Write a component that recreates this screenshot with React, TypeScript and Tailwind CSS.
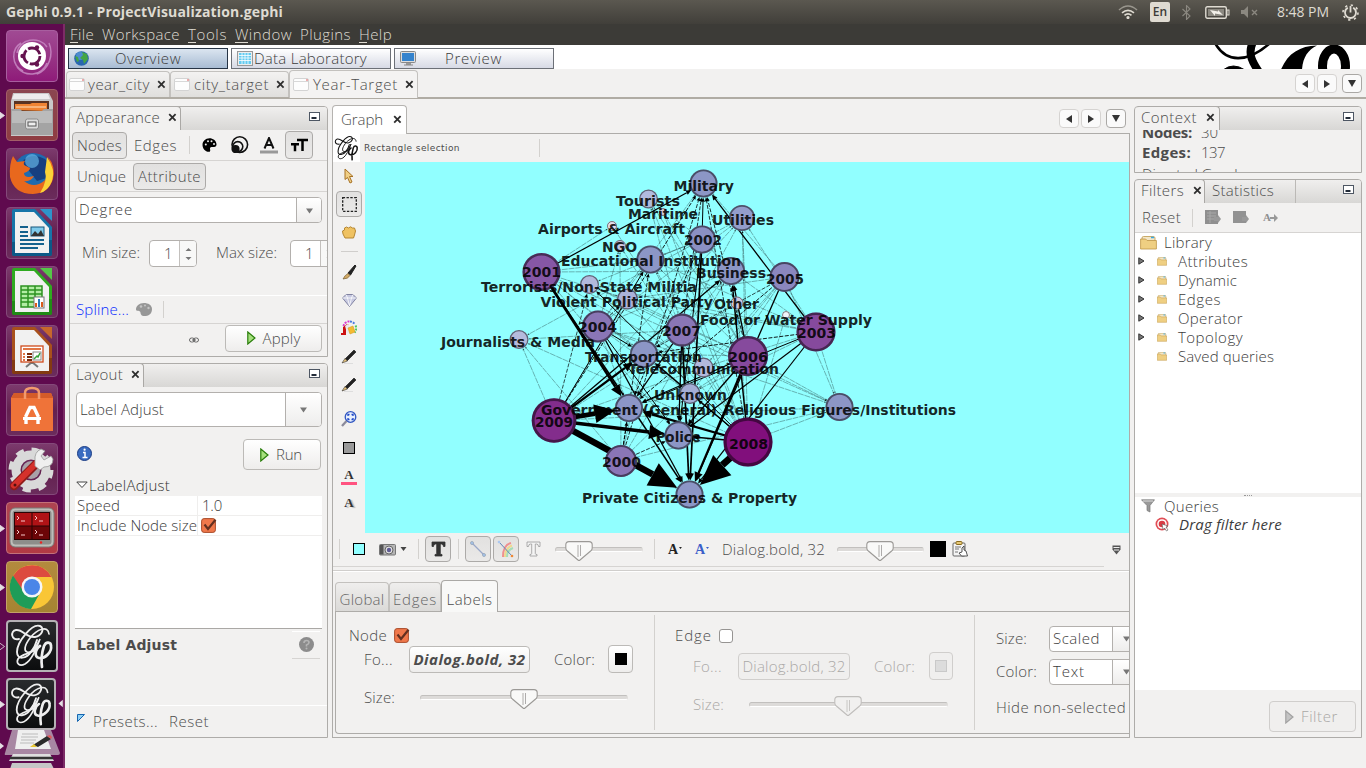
import { useLayoutEffect, useRef, type ReactNode } from "react";

/* ---------- text that keeps a set advance width ---------- */
function T({ w, c = "", children }: { w: number; c?: string; children: string }) {
  const ref = useRef<HTMLSpanElement>(null);
  useLayoutEffect(() => {
    const el = ref.current;
    if (!el) return;
    el.style.letterSpacing = "0px";
    const natural = el.getBoundingClientRect().width;
    el.style.letterSpacing = `${(w - natural) / children.length}px`;
  }, [w, children]);
  return (
    <span ref={ref} className={"inline-block shrink-0 whitespace-pre " + c}>
      {children}
    </span>
  );
}

const ui = "font-['Open_Sans',sans-serif] font-light text-[15px] leading-[19px]";

/* ---------- small controls ---------- */
const Sep = ({ c = "" }: { c?: string }) => <div className={"w-px shrink-0 bg-[#d3d1ce] " + c} />;

const Close = ({ c = "" }: { c?: string }) => (
  <svg className={"h-[9px] w-[9px] shrink-0 " + c} viewBox="0 0 9 9">
    <path d="M1.2 1.2l6.4 6.4M7.6 1.2L1.2 7.6" stroke="#2e2e2e" strokeWidth="1.8" />
  </svg>
);

const Minimise = () => (
  <svg className="mr-[7px] mt-[5px] h-[9px] w-[11px] shrink-0" viewBox="0 0 11 9">
    <rect x=".5" y=".5" width="10" height="8" fill="#fff" stroke="#4d5663" />
    <path d="M2.5 6h5" stroke="#222b38" strokeWidth="2" />
  </svg>
);

const Down = ({ c = "" }: { c?: string }) => (
  <svg className={"h-[6px] w-[9px] shrink-0 " + c} viewBox="0 0 9 6">
    <path d="M1 .5h7L4.5 5.5z" fill="#777" />
  </svg>
);

function NavButtons({ c = "" }: { c?: string }) {
  const box = "flex h-[19px] w-[20px] items-center justify-center rounded-[4px] border bg-[#fafafa] ";
  return (
    <div className={"flex shrink-0 items-center " + c}>
      <div className={box + "border-[#d5d3d1]"}>
        <svg className="h-[8px] w-[6px]" viewBox="0 0 6 8"><path d="M6 0v8L0 4z" fill="#333" /></svg>
      </div>
      <div className={box + "ml-[2px] border-[#d5d3d1]"}>
        <svg className="h-[8px] w-[6px]" viewBox="0 0 6 8"><path d="M0 0v8L6 4z" fill="#333" /></svg>
      </div>
      <div className={box + "ml-[5px] border-[#aaa8a5]"}>
        <svg className="h-[7px] w-[8px]" viewBox="0 0 8 7"><path d="M0 0h8L4 7z" fill="#333" /></svg>
      </div>
    </div>
  );
}

function Btn({ c, off, on, children }: { c: string; off?: boolean; on?: boolean; children: ReactNode }) {
  const look = on
    ? "border-[#acaaa8] bg-linear-to-b from-[#e2e1e0] to-[#eae9e8] "
    : off
      ? "border-[#d0cecc] bg-[#f0efee] "
      : "border-[#bcbab7] bg-linear-to-b from-white to-[#eeedec] ";
  return <div className={"flex shrink-0 items-center justify-center rounded-[4px] border " + look + c}>{children}</div>;
}

function Slider({ c, thumb, off }: { c: string; thumb: string; off?: boolean }) {
  return (
    <div className={"flex shrink-0 items-center " + c}>
      <div className="h-[5px] w-full rounded-[3px] border border-t-[#c2c0be] border-r-[#e0dedc] border-b-white border-l-[#c9c7c5] bg-[#dddbd9]">
        <svg className={"relative -top-[7px] h-[20px] w-[28px] " + thumb} viewBox="0 0 28 20">
          <path
            d="M4 .6h20q3.2 0 3.2 3.2v3.2q0 1.500-1 2.500L15 19q-1 .8-2 0L1.800 9.500q-1-1-1-2.500V3.800Q.8.600 4 .600z"
            fill={off ? "#f1f0ef" : "#f9f9f8"} stroke={off ? "#c0bebc" : "#9b9996"} strokeWidth="1.100"
          />
          <path d="M13 4v12M15.500 4v11" stroke={off ? "#c4c2c0" : "#a5a3a1"} strokeWidth=".9" />
        </svg>
      </div>
    </div>
  );
}

const Checked = ({ c = "" }: { c?: string }) => (
  <svg className={"h-[15px] w-[17px] shrink-0 " + c} viewBox="0 0 17 15">
    <rect x=".6" y=".6" width="13.800" height="13.800" rx="2.500" fill="#f0784b" stroke="#a84c2b" />
    <path d="M3.500 6.500l3.500 4.500L14.500 1.800" fill="none" stroke="#643020" strokeWidth="2.200" />
  </svg>
);

const Play = ({ off }: { off?: boolean }) => (
  <svg className="h-[14px] w-[9px] shrink-0" viewBox="0 0 9 14">
    <path d="M.8 1l7.200 6-7.200 6z" fill={off ? "#c4c4c4" : "#a5df7d"} stroke={off ? "#a2a2a2" : "#2a7e0b"} strokeWidth="1.200" />
  </svg>
);

/* ---------- Gephi monogram ---------- */
const Monogram = ({ c, ink }: { c: string; ink: string }) => (
  <svg className={c} viewBox="0 0 48 48" fill="none" stroke={ink} strokeLinecap="round">
    <path d="M11 17C3 19 2 9 8 8c7-1 10 8 19 7 7-1 10-9 5-11C24 1 9 20 9 30c0 9 10 6 14 0 3-4 5-8 6-12" strokeWidth="1.900" />
    <path d="M41 12C40 3 29 7 22 16c-6 8-6 13-3 14 4 2 10-6 13-13-4 10-8 21-15 25-6 3-9-1-7-5 3-5 12-5 17-9" strokeWidth="1.700" />
    <path d="M32 24c-5 3-6 11-1 12 7 1 13-7 12-12 0-4-5-5-7 0-2 6-3 14-2 21" strokeWidth="2.700" />
  </svg>
);

/* ---------- launcher ---------- */
function Tile({ bg, run, children }: { bg: string; run?: "on" | "off" | "focus"; children: ReactNode }) {
  return (
    <div className="flex h-[59px] shrink-0 items-start">
      <div className="flex h-[52px] w-[6px] items-center">
        {run && (
          <svg className="h-[9px] w-[5px]" viewBox="0 0 5 9">
            <path d="M-1 .5L4.500 4.500-1 8.500z" fill={run === "off" ? "none" : "#e4dfe3"} stroke="#e4dfe3" strokeWidth=".8" />
          </svg>
        )}
      </div>
      <div className={"h-[52px] w-[52px] overflow-hidden rounded-[4px] border " + bg}>{children}</div>
      {run === "focus" && (
        <svg className="ml-[2px] mt-[21px] h-[9px] w-[5px]" viewBox="0 0 5 9"><path d="M5 .5L.5 4.500 5 8.500z" fill="#e4dfe3" /></svg>
      )}
    </div>
  );
}

const Doc = ({ edge, fold, dark, children }: { edge: string; fold: string; dark: string; children: ReactNode }) => (
  <svg viewBox="0 0 50 50" className="h-full w-full">
    <path d="M7 1h21l17 18v27q0 2-2 2H7q-2 0-2-2V3q0-2 2-2z" fill={edge} />
    <path d="M5 34v12q0 2 2 2h36q2 0 2-2V32z" fill={dark} opacity=".5" />
    <path d="M33 1h12v12z" fill={fold} />
    <path d="M8 4h19l15 16v25H8z" fill="#f1f1f1" />
    {children}
  </svg>
);

const plain = "border-[#84497a] bg-linear-to-b from-[#7c3a6d] via-[#63204f] to-[#6b2c5c]";

function Launcher() {
  return (
    <div className="flex w-[65px] shrink-0 flex-col overflow-hidden border-r-2 border-[#7c2c66] bg-[#5f0a4e] pt-[6px]">
      <Tile bg="border-[#a85e9f] bg-linear-to-b from-[#a04a93] to-[#8f1a79]">
        <svg viewBox="0 0 50 50" className="h-full w-full" fill="none">
          <path d="M10 22C12 8 32 4 40 16M16 40C4 34 4 18 14 12M40 32C34 46 18 46 10 36M42 12c5 12 0 26-12 31" stroke="#c07cba" strokeWidth="1.500" />
          <circle cx="25" cy="25" r="14" fill="#fff" />
          <circle cx="25" cy="25" r="8" stroke="#65134f" strokeWidth="2.800" strokeDasharray="14.700 2" />
          <circle cx="15.500" cy="25" r="2.200" fill="#65134f" /><circle cx="30" cy="16.500" r="2.200" fill="#65134f" /><circle cx="30" cy="33.500" r="2.200" fill="#65134f" />
        </svg>
      </Tile>
      <Tile run="on" bg="border-[#a35e68] bg-linear-to-b from-[#8b4650] to-[#8f3c42]">
        <svg viewBox="0 0 50 50" className="h-full w-full">
          <path d="M6 3h36l4 8v35H4V11z" fill="#c9c9c9" />
          <path d="M7 4h34l2 5H5z" fill="#ededed" />
          <rect x="7" y="11" width="35" height="10" fill="#5b3423" />
          <path d="M8 20v-6h15l2-1h15v8z" fill="#f08433" /><path d="M9 17h30" stroke="#ffe1c0" />
          <path d="M4 19h9l2 2h20l2-2h9v26H4z" fill="#a4a4a4" /><path d="M5 21h40v12H5z" fill="#c4c4c4" opacity=".7" />
          <rect x="18.500" y="29" width="13" height="10" rx="2" fill="#ddd" stroke="#8a8a8a" /><rect x="21" y="32" width="8" height="4" fill="#eee" stroke="#555" />
        </svg>
      </Tile>
      <Tile bg={plain}>
        <svg viewBox="0 0 50 50" className="h-full w-full">
          <circle cx="26" cy="24" r="20" fill="#1e6bb0" />
          <path d="M15 13Q24 3 38 10 46 18 43 28L30 32Z" fill="#163f80" /><circle cx="25" cy="12" r="7" fill="#62b4e4" opacity=".7" />
          <path d="M6 7l4 6 8-1q-2 2-1 4l6 3q0 3-6 5 0 4 5 4l5-1q-3 6-10 5 10 8 20 0 4-3 4-9 3-8 0-15 8 9 5 22-4 14-20 15Q7 45 3 28 2 15 6 7z" fill="#e8681d" />
          <path d="M40 8q9 13 5 24-4 10-12 12 8-13 5-21z" fill="#fbd238" />
        </svg>
      </Tile>
      <Tile bg={plain}>
        <Doc edge="#1775a9" fold="#2e94ca" dark="#003d65">
          <path d="M13 19h8M13 24h8M13 28h8M13 32h24M13 36h24M13 40h18" stroke="#14618d" strokeWidth="2" />
          <rect x="24" y="19" width="13" height="9" fill="#7fcaeb" stroke="#16577d" /><path d="M24 28l4-5 3 3 3-4 3 6z" fill="#333" />
        </Doc>
      </Tile>
      <Tile bg={plain}>
        <Doc edge="#2faa20" fold="#55c748" dark="#116b09">
          <path d="M14 19h21v21H14z" fill="#b3eda4" /><path d="M14 19h21v21H14zM14 23h21M14 27h21M14 31h21M14 35h21M21 19v21M28 19v21" fill="none" stroke="#2c9220" strokeWidth="1.500" />
          <rect x="27" y="30" width="10" height="11" fill="#fff" stroke="#777" /><path d="M29 40v-4M35 40v-5" stroke="#db5b19" strokeWidth="2" /><path d="M32 40v-8" stroke="#2779b9" strokeWidth="2" />
        </Doc>
      </Tile>
      <Tile bg={plain}>
        <Doc edge="#a8501c" fold="#c7682c" dark="#5d2408">
          <path d="M19 41l6-5 6 5M25 35v3" stroke="#777" strokeWidth="2" fill="none" />
          <rect x="14" y="20" width="22" height="16" fill="#fff" stroke="#cf4b1c" strokeWidth="1.300" />
          <path d="M16 23h18" stroke="#e17544" strokeWidth="2" /><path d="M16 28h2M16 31h2M16 34h2" stroke="#e17544" strokeWidth="2" /><path d="M20 28h5M20 31h5M20 34h5" stroke="#7c2c0c" strokeWidth="2" />
          <rect x="26" y="26" width="8" height="8" fill="#fff" stroke="#888" /><path d="M27 33l3-3 1 1 2-4" stroke="#35a237" fill="none" strokeWidth="1.500" />
        </Doc>
      </Tile>
      <Tile bg={plain}>
        <svg viewBox="0 0 50 50" className="h-full w-full">
          <path d="M7 8h37l2 5v33H4V13z" fill="#ef7339" /><path d="M7 8h37l2 5H4z" fill="#d45b29" />
          <path d="M18 14V8q0-5 7-5t7 5v6" fill="none" stroke="#f29a6e" strokeWidth="2.500" />
          <path d="M18.500 32L23 22.500h4L31.500 32M19 35v4M31 35v4" stroke="#fff" strokeWidth="3.400" fill="none" />
          <path d="M16 33.500h18" stroke="#fff" strokeWidth="3" />
        </svg>
      </Tile>
      <Tile bg={plain}>
        <svg viewBox="0 0 50 50" className="h-full w-full">
          <circle cx="24" cy="26" r="15" fill="none" stroke="#d9d9d9" strokeWidth="9" />
          <circle cx="24" cy="26" r="20" fill="none" stroke="#d9d9d9" strokeWidth="5" strokeDasharray="8 7.700" />
          <circle cx="24" cy="26" r="9" fill="#a9a1a8" />
          <path d="M7 42l22-22" stroke="#8e1c1a" strokeWidth="8.500" strokeLinecap="round" /><path d="M7 41.500l22-22" stroke="#d5312c" strokeWidth="6" strokeLinecap="round" />
          <path d="M28 17q-1-9 6-12l4 2-4 5 3 4 7-4 2 3q0 8-9 8l-4 3-5-4z" fill="#efefef" stroke="#999" strokeWidth=".8" /><circle cx="8" cy="41" r="1.500" fill="#551010" />
        </svg>
      </Tile>
      <Tile run="on" bg="border-[#c4717a] bg-linear-to-b from-[#ad4451] to-[#b23a44]">
        <svg viewBox="0 0 50 50" className="h-full w-full">
          <rect x="3" y="5" width="44" height="39" rx="5" fill="#bdbdb9" stroke="#7a7a76" /><rect x="5.500" y="7.500" width="39" height="34" rx="3" fill="#8d8d8a" />
          <rect x="7" y="9" width="36" height="28" fill="#2b0405" />
          <path d="M8 10h16.500v12.500H8zM25.500 10H42v12.500H25.500z" fill="#b01316" /><path d="M8 23.500h16.500V36H8zM25.500 23.500H42V36H25.500z" fill="#6c0507" />
          <path d="M10 13l2 2-2 2M14 18h4M28 13l2 2-2 2M32 18h4M10 27l2 2-2 2M14 32h4M28 27l2 2-2 2M32 32h4" stroke="#f5c8c8" fill="none" />
          <circle cx="34" cy="39.500" r="1.200" fill="#e22" />
        </svg>
      </Tile>
      <Tile run="on" bg="border-[#c4a267] bg-linear-to-b from-[#b38a3e] to-[#a58432]">
        <svg viewBox="0 0 50 50" className="h-full w-full">
          <circle cx="25" cy="25" r="22" fill="#f9c636" />
          <path d="M25 15h19.500A22 22 0 0 0 6 14l10 16z" fill="#dc4b3f" />
          <path d="M6 13.600A22 22 0 0 0 24 47l9.500-17H17z" fill="#1e9c58" />
          <circle cx="25" cy="25" r="10.500" fill="#f6f6f6" /><circle cx="25" cy="25" r="8" fill="#4a86e8" />
        </svg>
      </Tile>
      <Tile run="off" bg="border-2 border-[#b5b1b5] bg-linear-to-b from-[#292b2d] to-[#0c0d0e]"><Monogram c="h-full w-full" ink="#eeeeee" /></Tile>
      <div className="-mt-px flex flex-col">
        <Tile run="focus" bg="border-2 border-[#b5b1b5] bg-linear-to-b from-[#292b2d] to-[#0c0d0e]"><Monogram c="h-full w-full" ink="#eeeeee" /></Tile>
      </div>
      <svg className="-mt-[7px] h-[39px] w-[63px] shrink-0" viewBox="0 0 63 39">
        <path d="M12 0h39l9 23q0 2-2 2H6q-2 0-1-2z" fill="#a887a3" />
        <path d="M18 0h26l7 19H15z" fill="#efefef" /><path d="M22 4h16M21 7h17M21 10h15M20 13h14" stroke="#bbb" />
        <path d="M33 15L47 6l4 3-13 8z" fill="#2b2b2b" /><path d="M30 17l4-3 3 3z" fill="#e9c832" /><path d="M47 6l3-1 2 2-1 2z" fill="#e05a5a" />
        <path d="M13 24h37l4 7H9z" fill="#dedede" /><path d="M10 28h43" stroke="#333" strokeWidth="2.500" /><path d="M12 33h39l3 6H10z" fill="#c6c6c6" />
        <path d="M-1 12l5 4-5 4z" fill="#e4dfe3" />
      </svg>
    </div>
  );
}

/* ---------- graph ---------- */
type N = { x: number; y: number; r: number; f: string; t: string; a: number; b: number; ly: number };
const lilac = "#8c96c6", pale = "#b3b9dc";
const nodes: Record<string, N> = {
  y0: { x: 621, y: 461, r: 16, f: "#8a76b6", t: "2000", a: 602, b: 641, ly: 462 },
  y1: { x: 541.500, y: 272, r: 19, f: "#8657a5", t: "2001", a: 522, b: 561, ly: 272 },
  y2: { x: 702, y: 239.500, r: 14, f: "#8b90c3", t: "2002", a: 684, b: 722, ly: 240 },
  y3: { x: 816, y: 332, r: 19.500, f: "#864a9d", t: "2003", a: 797, b: 836, ly: 333 },
  y4: { x: 598, y: 326.500, r: 16, f: "#8a76b6", t: "2004", a: 578, b: 617, ly: 327 },
  y5: { x: 784.500, y: 277, r: 15, f: "#8b87be", t: "2005", a: 766, b: 804, ly: 278.500 },
  y6: { x: 748, y: 356, r: 20, f: "#864a9d", t: "2006", a: 728, b: 768, ly: 356.500 },
  y7: { x: 682, y: 330, r: 16.500, f: "#8a76b6", t: "2007", a: 662, b: 701, ly: 331 },
  y8: { x: 748, y: 442, r: 24.500, f: "#810f7c", t: "2008", a: 729, b: 768, ly: 443.500 },
  y9: { x: 554, y: 420.500, r: 22.300, f: "#832d8c", t: "2009", a: 535, b: 573, ly: 422 },
  mil: { x: 703.500, y: 183.500, r: 14, f: lilac, t: "Military", a: 673.500, b: 734, ly: 186 },
  uti: { x: 742, y: 218, r: 13, f: "#949dcb", t: "Utilities", a: 712, b: 774, ly: 219.500 },
  tou: { x: 648.500, y: 199, r: 9.500, f: "#b1badd", t: "Tourists", a: 616, b: 680, ly: 200.500 },
  mar: { x: 663, y: 212, r: 4, f: "#d9cede", t: "Maritime", a: 628, b: 698, ly: 213.500 },
  air: { x: 612, y: 226, r: 5, f: "#e3ddec", t: "Airports & Aircraft", a: 538, b: 685, ly: 228.500 },
  ngo: { x: 620, y: 246, r: 6, f: "#c9c6df", t: "NGO", a: 602, b: 637, ly: 247 },
  edu: { x: 650.500, y: 259.500, r: 14, f: lilac, t: "Educational Institution", a: 561, b: 741, ly: 261 },
  bus: { x: 731, y: 271, r: 14, f: lilac, t: "Business", a: 696, b: 766, ly: 273 },
  ter: { x: 589.500, y: 284.500, r: 9.500, f: pale, t: "Terrorists/Non-State Militia", a: 481, b: 697, ly: 286.500 },
  vio: { x: 627.500, y: 299, r: 10.500, f: "#abb1d8", t: "Violent Political Party", a: 540.500, b: 713, ly: 301.500 },
  oth: { x: 737, y: 303, r: 6.500, f: "#cfc9df", t: "Other", a: 714, b: 759, ly: 304 },
  foo: { x: 786, y: 315, r: 4, f: "#f2f4fa", t: "Food or Water Supply", a: 700, b: 872, ly: 319.500 },
  jou: { x: 519, y: 339.500, r: 9.500, f: "#b5bbdc", t: "Journalists & Media", a: 441, b: 595, ly: 342 },
  tra: { x: 644, y: 354, r: 14, f: lilac, t: "Transportation", a: 585, b: 702, ly: 356.500 },
  tel: { x: 703.500, y: 367.500, r: 10, f: pale, t: "Telecommunication", a: 628, b: 779, ly: 369 },
  unk: { x: 690, y: 393.500, r: 10.500, f: "#a5add5", t: "Unknown", a: 654, b: 727, ly: 394.500 },
  gov: { x: 629, y: 408, r: 14, f: lilac, t: "Government (General)", a: 541, b: 717, ly: 410 },
  rel: { x: 839.500, y: 407, r: 14, f: lilac, t: "Religious Figures/Institutions", a: 724, b: 956, ly: 409.500 },
  pol: { x: 678.500, y: 435.500, r: 14, f: lilac, t: "Police", a: 655.500, b: 701, ly: 437 },
  pri: { x: 689.500, y: 494.500, r: 14, f: lilac, t: "Private Citizens & Property", a: 582, b: 797, ly: 497.500 },
};

// source year, target, stroke weight
const strong: [string, string, number][] = [
  ["y9", "pri", 6.5], ["y8", "pri", 7], ["y9", "gov", 4.8], ["y9", "pol", 3.600], ["y1", "gov", 2.600], ["y1", "pri", 1.600],
  ["y6", "pri", 2.200], ["y8", "gov", 2.200], ["y8", "pol", 1.500], ["y9", "tra", 2.200], ["y9", "bus", 1.300], ["y7", "pri", 1.700],
  ["y7", "pol", 1.300], ["y2", "pri", 1.700], ["y2", "pol", 1], ["y3", "pol", 1.200], ["y3", "mil", 1.300], ["y5", "pri", 1.300],
  ["y5", "gov", 0.9], ["y4", "pri", 1.300], ["y4", "pol", 1], ["y1", "mil", 1.200], ["y8", "tra", 1.400], ["y6", "bus", 1.300],
  ["y6", "pol", 1.300], ["y8", "ter", 1], ["y6", "mil", 0.8], ["y3", "gov", 1], ["y3", "pri", 1.200], ["y8", "bus", 1.500],
  ["y9", "edu", 1], ["y0", "edu", 0.800], ["y0", "mil", 0.800], ["y9", "mil", 0.9], ["y2", "mil", 1], ["y7", "mil", 0.8],
  ["y4", "tra", 1], ["y4", "vio", 0.800], ["y2", "gov", 0.9], ["y7", "gov", 1.200], ["y3", "tra", 0.9], ["y5", "tra", 0.7],
  ["y9", "ter", 0.7], ["y8", "unk", 1], ["y0", "gov", 0.9], ["y0", "pol", 0.8], ["y6", "gov", 1.100], ["y8", "mil", 0.8],
];
const faint: [string, string][] = [
  ["y0", "jou"], ["y9", "jou"], ["y2", "jou"], ["y8", "jou"], ["y7", "jou"],
  ["y1", "rel"], ["y3", "rel"], ["y4", "rel"], ["y5", "rel"], ["y6", "rel"], ["y7", "rel"], ["y8", "rel"], ["y9", "rel"], ["y0", "rel"],
  ["y3", "uti"], ["y8", "uti"], ["y9", "uti"], ["y7", "uti"], ["y4", "uti"], ["y6", "uti"], ["y2", "uti"],
  ["y1", "edu"], ["y2", "edu"], ["y3", "edu"], ["y4", "edu"], ["y6", "edu"], ["y7", "edu"], ["y8", "edu"],
  ["y1", "bus"], ["y2", "bus"], ["y3", "bus"], ["y4", "bus"], ["y5", "bus"], ["y7", "bus"], ["y0", "bus"],
  ["y2", "tra"], ["y1", "tra"], ["y6", "tra"], ["y7", "tra"], ["y0", "tra"], ["y4", "gov"], ["y5", "pol"], ["y1", "pol"], ["y0", "pri"],
  ["y2", "tou"], ["y6", "tou"], ["y7", "tou"], ["y8", "tou"], ["y6", "mar"], ["y8", "mar"], ["y1", "air"], ["y7", "air"], ["y8", "ngo"], ["y4", "ngo"], ["y0", "ngo"],
  ["y6", "ter"], ["y7", "ter"], ["y3", "ter"], ["y2", "ter"], ["y1", "vio"], ["y3", "vio"], ["y6", "vio"], ["y8", "vio"], ["y9", "vio"], ["y5", "vio"],
  ["y8", "oth"], ["y6", "oth"], ["y9", "oth"], ["y3", "foo"], ["y8", "foo"], ["y1", "tel"], ["y3", "tel"], ["y9", "tel"], ["y8", "tel"], ["y4", "tel"], ["y5", "tel"],
  ["y1", "unk"], ["y3", "unk"], ["y9", "unk"], ["y6", "unk"], ["y7", "unk"], ["y5", "unk"], ["y4", "unk"], ["y0", "unk"], ["y4", "mil"], ["y5", "mil"],
];

function Edge({ s, t, w, faded }: { s: N; t: N; w: number; faded?: boolean }) {
  const dx = t.x - s.x, dy = t.y - s.y, d = Math.hypot(dx, dy);
  const ux = dx / d, uy = dy / d;
  const len = faded ? 2 : Math.max(4, w * 4.3), half = faded ? 0.8 : Math.max(1.8, w * 1.95);
  const tx = t.x - ux * t.r, ty = t.y - uy * t.r;
  const bx = tx - ux * len, by = ty - uy * len;
  const p = (n: number) => n.toFixed(1);
  return (
    <g opacity={faded ? 0.75 : 1}>
      <path d={`M${p(s.x)} ${p(s.y)}L${p(bx)} ${p(by)}`} stroke="#000" strokeWidth={w} strokeDasharray={faded ? "6 .8" : w <= 0.9 ? "4 1.5" : undefined} />
      <path d={`M${p(tx)} ${p(ty)}L${p(bx - uy * half)} ${p(by + ux * half)}L${p(bx + uy * half)} ${p(by - ux * half)}z`} />
    </g>
  );
}

function Graph() {
  const all = Object.values(nodes);
  return (
    <svg className="h-[371px] w-[764px] shrink-0 bg-[#91ffff]" viewBox="365 162 764 371">
      {faint.map(([a, b]) => <Edge key={a + b} s={nodes[a]} t={nodes[b]} w={0.4} faded />)}
      {strong.map(([a, b, w]) => <Edge key={a + b} s={nodes[a]} t={nodes[b]} w={w} />)}
      {all.map((n) => {
        const ring = Math.max(1, n.r * 0.13);
        return (
          <g key={n.t}>
            <circle cx={n.x} cy={n.y} r={n.r} fill={n.f} />
            <circle cx={n.x} cy={n.y} r={n.r - ring / 2} fill="none" stroke="#000" strokeOpacity=".48" strokeWidth={ring} />
          </g>
        );
      })}
      <g fill="#000" fillOpacity=".87" className="font-['DejaVu_Sans',sans-serif] text-[13.500px] font-bold">
        {all.map((n) => (
          <text key={n.t} x={n.a} y={n.ly + 5} textLength={n.b - n.a} lengthAdjust="spacingAndGlyphs">{n.t}</text>
        ))}
      </g>
    </svg>
  );
}

/* ---------- window chrome ---------- */
function TopBar() {
  return (
    <div className="flex h-[24px] shrink-0 items-center bg-linear-to-b from-[#5b5850] to-[#413f3a] pl-[6px] font-['Open_Sans',sans-serif] text-[#dfdbd2]">
      <T w={277} c="text-[14px] font-bold leading-[18px]">Gephi 0.9.1 - ProjectVisualization.gephi</T>
      <div className="flex-1" />
      <svg className="mr-[-1px] h-[14px] w-[20px]" viewBox="0 0 20 14" fill="none" stroke="#dfdbd2" strokeWidth="1.600">
        <path d="M1 5Q10-3 19 5" opacity=".5" /><path d="M4 7.800q6-5 12 0M6.500 10.300q3.500-3 7 0" /><circle cx="10" cy="12.500" r=".8" fill="#dfdbd2" />
      </svg>
      <div className="ml-[13px] flex h-[20px] w-[20px] items-center justify-center rounded-[2px] bg-[#dfdbd2] text-[12px] font-semibold text-[#3c3b37]">En</div>
      <svg className="ml-[12px] h-[15px] w-[9px]" viewBox="0 0 9 15" fill="none" stroke="#8b8880" strokeWidth="1.100"><path d="M.5 4l7.500 7-3.500 3.500V.500L8 4 .5 11" /></svg>
      <svg className="ml-[14px] h-[13px] w-[25px]" viewBox="0 0 25 13">
        <rect x=".8" y=".8" width="20.500" height="11.400" rx="1.500" fill="none" stroke="#dfdbd2" strokeWidth="1.400" /><rect x="22" y="4" width="2" height="5" fill="none" stroke="#dfdbd2" />
        <rect x="3" y="3" width="16" height="7" fill="#8b8880" /><path d="M5 4l8 1.500V4l5 5-8-1.500V10z" fill="#f2efe8" />
      </svg>
      <svg className="ml-[11px] h-[12px] w-[18px]" viewBox="0 0 18 12"><path d="M0 4h3l4-4v12L3 8H0z" fill="#8b8880" /><path d="M11 4l5 5M16 4l-5 5" stroke="#8b8880" strokeWidth="1.400" /></svg>
      <T w={52} c="ml-[18px] text-[14px] leading-[18px]">8:48 PM</T>
      <svg className="ml-[13px] mr-[7px] h-[17px] w-[17px]" viewBox="0 0 17 17" fill="none" stroke="#dfdbd2">
        <circle cx="8.500" cy="8.500" r="5.500" strokeWidth="1.800" strokeDasharray="29 5.500" strokeDashoffset="6.500" /><circle cx="8.500" cy="8.500" r="7.500" strokeWidth="1.600" strokeDasharray="2.300 3.590" /><path d="M8.500 2v6.500" strokeWidth="1.800" />
      </svg>
    </div>
  );
}

function Menu() {
  const items: [string, string, number][] = [["F", "ile", 24], ["", "Workspace", 78], ["T", "ools", 39], ["W", "indow", 57], ["", "Plugins", 51], ["H", "elp", 33]];
  return (
    <div className={"flex h-[21px] shrink-0 items-center gap-[8px] bg-[#3c3b37] pl-[5px] text-[#dfdbd2] " + ui}>
      {items.map(([u, rest, w]) => (
        <span key={rest} className="relative flex shrink-0">
          <T w={w}>{u + rest}</T>
          {u && <span className={"absolute bottom-[1px] left-0 h-px bg-[#dfdbd2] " + (u === "W" ? "w-[13px]" : "w-[8px]")} />}
        </span>
      ))}
    </div>
  );
}

function Modes() {
  const box = "flex h-[21px] w-[160px] shrink-0 items-center border ";
  return (
    <div className={"flex h-[24px] shrink-0 items-center bg-white pl-[3px] pt-[2px] text-[#3c3c3c] " + ui}>
      <div className={box + "border-[#263445] bg-linear-to-b from-[#dbe5f0] to-[#a8bcd3]"}>
        <svg className="ml-[5px] h-[15px] w-[15px]" viewBox="0 0 15 15"><circle cx="7.500" cy="7.500" r="7.300" fill="#2867b0" /><circle cx="6" cy="5" r="4" fill="#5d9ddd" opacity=".7" /><path d="M8 1l5 2 1 5-4 5-1-4-3-2 3-3zM1 5l3 1 1 4-2 1z" fill="#43a545" /></svg>
        <T w={66} c="ml-[26px]">Overview</T>
      </div>
      <div className={box + "ml-[3px] border-[#6c7077] bg-linear-to-b from-white to-[#d7dae5]"}>
        <svg className="ml-[5px] h-[15px] w-[16px]" viewBox="0 0 16 15"><rect x=".5" y=".5" width="15" height="14" fill="#eee" stroke="#999" /><rect x="2" y="2" width="12" height="11" fill="#63cbf0" /><path d="M2 4.500h12M2 7h12M2 9.500h12M5 2v11M8 2v11M11 2v11" stroke="#fff" strokeWidth=".8" /></svg>
        <T w={113} c="ml-[1px]">Data Laboratory</T>
      </div>
      <div className={box + "ml-[3px] border-[#6c7077] bg-linear-to-b from-white to-[#d7dae5]"}>
        <svg className="ml-[5px] h-[15px] w-[17px]" viewBox="0 0 17 15"><rect x=".5" y=".5" width="15" height="11" rx="1" fill="#ddd" stroke="#888" /><rect x="2" y="2" width="12" height="8" fill="#3583cd" /><path d="M6 12h5v2H6z" fill="#999" /><path d="M4 14h9" stroke="#888" /></svg>
        <T w={57} c="ml-[28px]">Preview</T>
      </div>
      <div className="flex-1" />
      <svg className="-mt-[2px] h-[24px] w-[166px]" viewBox="0 0 166 24" fill="none" stroke="#000">
        <path d="M15-2C26 18 47 18 69-1" strokeWidth="2.600" /><path d="M53-3C47 9 53 18 59 27" strokeWidth="8" /><path d="M23 25Q33 17 45 25z" fill="#000" />
        <path d="M117 .500C100 1 88 8 81 24.500H102C103 12 108 5 117 .500z" fill="#000" stroke="none" />
        <ellipse cx="134" cy="21" rx="11.500" ry="17" strokeWidth="9" />
      </svg>
    </div>
  );
}

function DocTabs() {
  const tab = "flex items-center rounded-t-[4px] border border-b-0 border-[#c3c1be] ";
  const icon = (
    <svg className="h-[15px] w-[16px] shrink-0" viewBox="0 0 16 15"><rect x=".5" y="1.500" width="15" height="12" rx="1.500" fill="#fdfdfd" stroke="#d3d3d3" /><path d="M.5 4.500h15" stroke="#d8d8d8" /><path d="M13 3h2" stroke="#dc5c5c" /></svg>
  );
  return (
    <div className={"flex h-[30px] shrink-0 items-end border-b-2 border-[#b0aca4] pl-px text-[#4c4c4c] " + ui}>
      <div className={tab + "h-[26px] w-[104px] bg-linear-to-b from-[#f3f2f1] to-[#e0dfdd] pl-[2px]"}>{icon}<T w={62} c="ml-[3px]">year_city</T><Close c="ml-[7px]" /></div>
      <div className={tab + "h-[26px] w-[119px] bg-linear-to-b from-[#f3f2f1] to-[#e0dfdd] pl-[3px]"}>{icon}<T w={75} c="ml-[4px]">city_target</T><Close c="ml-[7px]" /></div>
      <div className={tab + "relative -bottom-[1px] h-[28px] w-[129px] border-[#aaa8a5] bg-[#f4f3f2] pl-[3px]"}>{icon}<T w={85} c="ml-[4px]">Year-Target</T><Close c="ml-[7px]" /></div>
      <div className="flex-1" />
      <NavButtons c="mb-[4px] mr-[4px]" />
    </div>
  );
}

/* ---------- panels ---------- */
function PanelHead({ title, w, tab, gap = "ml-[9px]", extra }: { title: string; w: number; tab: string; gap?: string; extra?: ReactNode }) {
  return (
    <div className="flex h-[23px] shrink-0 bg-linear-to-b from-[#f0efee] to-[#d8d7d5]">
      <div className={"-mt-px flex h-[24px] shrink-0 items-center rounded-t-[4px] border-r border-t border-[#aaa8a5] bg-[#f2f1f0] pb-[2px] pl-[6px] " + tab}>
        <T w={w}>{title}</T>
        <Close c={gap} />
      </div>
      {extra}
      <div className="flex-1" />
      <Minimise />
    </div>
  );
}

const frame = "flex shrink-0 flex-col overflow-hidden rounded-t-[4px] border border-[#aeaca9] ";

function Combo({ c, arrow, w, children }: { c: string; arrow: string; w: number; children: string }) {
  return (
    <div className={"flex shrink-0 items-stretch overflow-hidden rounded-[4px] border border-[#b3b0ad] bg-white " + c}>
      <div className="flex flex-1 items-center pb-px pl-[3px]"><T w={w} c="text-[#3c3c3c]">{children}</T></div>
      <div className={"flex items-center justify-center border-l border-[#b3b0ad] bg-linear-to-b from-white to-[#eeedec] " + arrow}><Down c="mt-px" /></div>
    </div>
  );
}

const Spinner = () => (
  <div className="flex h-[27px] w-[48px] shrink-0 overflow-hidden rounded-[4px] border border-[#b3b0ad] bg-white">
    <div className="flex w-[29px] items-center justify-end pb-px pr-[6px]"><T w={9}>1</T></div>
    <div className="flex flex-1 items-center justify-center border-l border-[#c3c0bd] bg-[#f8f8f7]">
      <svg className="h-[14px] w-[7px]" viewBox="0 0 7 14"><path d="M.5 4h6l-3-3zM.5 10h6l-3 3z" fill="#777" /></svg>
    </div>
  </div>
);

function Appearance() {
  return (
    <div className={frame + "h-[251px]"}>
      <PanelHead title="Appearance" w={84} tab="w-[111px]" gap="ml-[8px]" />
      <div className="flex h-[31px] shrink-0 items-center border-b border-[#d6d4d2] pl-[2px]">
        <Btn on c="h-[27px] w-[55px]"><T w={45}>Nodes</T></Btn>
        <T w={43} c="ml-[7px]">Edges</T>
        <Sep c="ml-[12px] h-[18px]" />
        <svg className="ml-[12px] h-[14px] w-[15px] shrink-0" viewBox="0 0 15 14"><path d="M7.500.3C3.500.3.500 3.300.500 7s3 7 6.500 6.800c2 0 1-2.300 1-3.300 0-1.800 2-1.500 4-1.500s2.700-1.500 2.500-3C14 2.500 11 .3 7.500.3z" fill="#000" /><g fill="#eee"><circle cx="3.800" cy="6.500" r="1" /><circle cx="6" cy="3.200" r="1" /><circle cx="9.500" cy="3.200" r="1" /><circle cx="12" cy="6" r="1" /></g></svg>
        <svg className="ml-[13px] h-[18px] w-[19px] shrink-0" viewBox="0 0 19 18" fill="none" stroke="#111" strokeWidth="1.600"><circle cx="9.800" cy="8.600" r="7.800" /><circle cx="7.800" cy="10.600" r="5" /><circle cx="5.500" cy="13" r="3.300" fill="#111" /></svg>
        <svg className="ml-[11px] h-[17px] w-[18px] shrink-0" viewBox="0 0 18 17"><path d="M4.500 11.500L9 1l4.500 10.500M6 8h6" stroke="#111" strokeWidth="2" fill="none" /><path d="M0 15h18" stroke="#999" strokeWidth="3" /></svg>
        <Btn on c="ml-[7px] h-[28px] w-[28px]"><svg className="h-[14px] w-[17px]" viewBox="0 0 17 14" stroke="#000" strokeWidth="2.500" fill="none"><path d="M6 2h11M11.500 2v11M0 6.200h8M4 6.200v7" /></svg></Btn>
      </div>
      <div className="flex h-[31px] shrink-0 items-center border-b border-[#d6d4d2] pl-[7px]">
        <T w={49}>Unique</T>
        <Btn on c="ml-[7px] h-[27px] w-[73px]"><T w={63}>Attribute</T></Btn>
      </div>
      <Combo c="ml-[5px] mt-[5px] h-[26px] w-[247px]" arrow="w-[25px]" w={54}>Degree</Combo>
      <div className="mt-[17px] flex h-[27px] shrink-0 items-center pl-[12px]">
        <T w={58} c="mb-[2px]">Min size:</T><div className="w-[9px] shrink-0" /><Spinner />
        <T w={61} c="mb-[2px] ml-[19px]">Max size:</T><div className="w-[13px] shrink-0" /><Spinner />
      </div>
      <div className="mt-[28px] flex h-[29px] shrink-0 items-center border-t border-b border-t-white border-b-[#d6d4d2] pb-px pl-[6px]">
        <T w={53} c="text-[#0a2cff]">Spline...</T>
        <svg className="ml-[7px] h-[13px] w-[16px]" viewBox="0 0 16 13"><path d="M8 0C3 0 0 3 0 6.500c0 2 3 1 4 2s0 4 3.500 4.500c6 .5 8.500-3 8.500-7C16 2 12 0 8 0z" fill="#979797" /><g fill="#c5c5c5"><circle cx="5" cy="3.500" r="1.300" /><circle cx="9" cy="2.500" r="1" /><circle cx="12.500" cy="5" r="1.200" /></g></svg>
        <Sep c="ml-[11px] h-[17px]" />
      </div>
      <div className="flex flex-1 items-start">
        <svg className="ml-[119px] mt-[13px] h-[6px] w-[10px] shrink-0" viewBox="0 0 10 6" fill="none" stroke="#666"><rect x=".5" y="1" width="5" height="4" rx="2" /><rect x="4.500" y="1" width="5" height="4" rx="2" /><path d="M3 3h4" /></svg>
        <Btn c="ml-[26px] mt-px h-[27px] w-[97px] gap-[7px] pb-px"><Play /><T w={38}>Apply</T></Btn>
      </div>
    </div>
  );
}

function LayoutPanel() {
  return (
    <div className={frame + "mt-[6px] h-[375px]"}>
      <PanelHead title="Layout" w={47} tab="w-[74px]" gap="ml-[8px]" />
      <Combo c="ml-[6px] mt-[5px] h-[35px] w-[246px]" arrow="w-[36px]" w={84}>Label Adjust</Combo>
      <div className="mt-[12px] flex h-[31px] shrink-0 items-center justify-between pl-[7px] pr-[6px]">
        <svg className="mb-[3px] h-[15px] w-[15px]" viewBox="0 0 15 15"><circle cx="7.500" cy="7.500" r="7" fill="#396bc0" stroke="#1c3c84" /><path d="M6 6.500h2v5M5.500 11.500h5" stroke="#fff" strokeWidth="1.500" fill="none" /><circle cx="7.600" cy="3.700" r="1.100" fill="#fff" /></svg>
        <Btn c="h-[31px] w-[78px] gap-[7px] pr-[2px]"><Play /><T w={26}>Run</T></Btn>
      </div>
      <div className="mt-[5px] flex h-[20px] shrink-0 items-center pl-[6px] text-[#333]">
        <svg className="h-[8px] w-[12px]" viewBox="0 0 12 8"><path d="M.8 1h10.400L6 6.500z" fill="#fff" stroke="#444" /></svg>
        <T w={81} c="ml-px">LabelAdjust</T>
      </div>
      <div className="ml-[5px] mt-px flex h-[133px] w-[247px] shrink-0 flex-col border-b border-[#aaa8a5] bg-white text-[#3c3c3c]">
        <div className="flex h-[20px] shrink-0 items-center border-b border-[#efeeed] pl-[2px]"><T w={43}>Speed</T><div className="w-[77px]" /><Sep c="h-full bg-[#efeeed]" /><T w={20} c="ml-[4px]">1.0</T></div>
        <div className="flex h-[20px] shrink-0 items-center border-b border-[#efeeed] pl-[2px]"><T w={120}>Include Node size</T><Sep c="h-full bg-[#efeeed]" /><Checked c="ml-[3px]" /></div>
      </div>
      <div className="flex h-[77px] shrink-0 items-start border-b border-white pl-[7px]">
        <T w={100} c="mt-[7px] font-['DejaVu_Sans',sans-serif] text-[14px] font-bold">Label Adjust</T>
        <div className="ml-[115px] mt-[2px] flex h-[28px] w-[28px] items-center justify-center border-b border-t border-b-[#d6d4d2] border-t-white">
          <svg className="mb-[2px] h-[15px] w-[15px]" viewBox="0 0 15 15"><circle cx="7.500" cy="7.500" r="7.500" fill="#8c8c8c" /><path d="M5 6q0-2.500 2.500-2.500T10 5.500Q10 7 7.500 8v1.500" stroke="#b5b5b5" strokeWidth="1.600" fill="none" /><circle cx="7.500" cy="11.500" r="1" fill="#b5b5b5" /></svg>
        </div>
      </div>
      <div className="flex flex-1 items-center pl-[7px]">
        <svg className="mb-[7px] h-[8px] w-[8px]" viewBox="0 0 8 8"><path d="M.5.500h7L.5 7.500z" fill="#8fd0f5" stroke="#1565b0" /></svg>
        <T w={65} c="ml-[8px]">Presets...</T><T w={40} c="ml-[11px]">Reset</T>
      </div>
    </div>
  );
}

const ToolPen = ({ c }: { c: string }) => (
  <svg className={"h-[16px] w-[16px] " + c} viewBox="0 0 16 16"><path d="M4 11L13 2l2 2-9 9z" fill="#222" stroke="#444" /><path d="M1 15l3-4.500L6.500 13z" fill="#e4c27b" stroke="#333" strokeWidth=".6" /><path d="M3 15.500h9" stroke="#ddd" /></svg>
);

function SideTools() {
  return (
    <div className="flex w-[32px] shrink-0 flex-col items-center">
      <svg className="mt-[6px] h-[16px] w-[12px]" viewBox="0 0 12 16"><path d="M2 1l8 7.500H6.500L9 14l-2 1-2.500-5.500L2 11.500z" fill="#f0cf85" stroke="#a87225" /></svg>
      <Btn on c="mt-[7px] h-[26px] w-[26px]"><svg className="h-[15px] w-[15px]" viewBox="0 0 15 15"><rect x=".7" y=".7" width="13.600" height="13.600" fill="none" stroke="#222" strokeWidth="1.300" strokeDasharray="2.400 1.400" /></svg></Btn>
      <svg className="mt-[9px] h-[13px] w-[14px]" viewBox="0 0 14 13"><path d="M3 12L1 8 .5 5l2-1V2l2-1 2 1 2-1.200 2 1.200h2l1 3-1 4-1 3z" fill="#efc262" stroke="#b58733" /></svg>
      <div className="mt-[12px] h-px w-[17px] shrink-0 bg-[#d0cecc]" />
      <svg className="mt-[12px] h-[16px] w-[15px]" viewBox="0 0 15 16"><path d="M6 9L13 1l1 1-5.500 9z" fill="#222" stroke="#222" /><path d="M1 15q2-4 5-5.500l2 2Q6 15 1 15z" fill="#d3ab67" stroke="#776033" strokeWidth=".7" /></svg>
      <svg className="mt-[14px] h-[13px] w-[15px]" viewBox="0 0 15 13"><path d="M4 .500h7L14.500 4 7.500 12.500.5 4z" fill="#c6c8e0" stroke="#8183a1" /><path d="M.5 4h14M4 .500L5.500 4l2 8 2-8L11 .500" fill="none" stroke="#fff" strokeWidth=".8" /></svg>
      <svg className="mt-[13px] h-[16px] w-[16px]" viewBox="0 0 16 16"><path d="M2.500 6a5.500 5.500 0 0 1 6-4.500" stroke="#d93bd0" strokeWidth="2" fill="none" strokeDasharray="2 1" /><path d="M9 1.500a6 6 0 0 1 5 3" stroke="#4a7be0" strokeWidth="2" fill="none" strokeDasharray="2 1" /><path d="M14.500 5.500a6 6 0 0 1-1 7" stroke="#4ac95b" strokeWidth="2" fill="none" strokeDasharray="2 1" /><path d="M0 15h5V7l3-2-2-1-4 3v6H0z" fill="#c11" /><path d="M4 6l3-2 2 3v6H6z" fill="#e9e9ee" /><path d="M7 8l5-2 2 6-5 2z" fill="#f4bb30" stroke="#d59c30" strokeWidth=".6" /></svg>
      <ToolPen c="mt-[12px]" /><ToolPen c="mt-[12px]" />
      <svg className="mt-[19px] h-[16px] w-[16px]" viewBox="0 0 16 16" fill="none"><circle cx="9.500" cy="6" r="5.300" fill="#e7effc" stroke="#3157c1" strokeWidth="1.300" /><path d="M7 5V3.500h1.500M10.500 3.500H12V5M12 7v1.500h-1.500M8.500 8.500H7V7" stroke="#1d46c9" strokeWidth="1.300" /><path d="M5.500 10L1 15" stroke="#8b8b9b" strokeWidth="2.300" /></svg>
      <div className="mt-[15px] h-[12px] w-[12px] shrink-0 border border-black bg-[#9a9a9a]" />
      <div className="mt-[14px] flex h-[17px] w-[16px] shrink-0 flex-col items-center border-b-[3px] border-[#ff5380] font-['Liberation_Serif',serif] text-[13px] font-bold leading-[13px] text-[#333]">A</div>
      <span className="mt-[11px] font-['Liberation_Serif',serif] text-[13px] font-bold leading-[14px] text-[#333] [text-shadow:2px_1px_1px_#bbb]">A</span>
    </div>
  );
}

const BigT = ({ light }: { light?: boolean }) => (
  <svg className="h-[16px] w-[15px] shrink-0" viewBox="0 0 15 16"><path d="M1 1h13v4.500h-1.500q0-2.500-2-2.500H9.300v9.500q0 1 1.700 1V15H4v-1.500q1.700 0 1.700-1V3H4.500q-2 0-2 2.500H1z" fill={light ? "#f4f4f4" : "#333"} stroke={light ? "#999" : "#333"} strokeWidth=".8" /></svg>
);

const LetterMenu = ({ c }: { c: string }) => (
  <div className={"flex shrink-0 items-center gap-px font-['Liberation_Serif',serif] text-[14px] font-bold " + c}>
    A
    <svg className="mb-[2px] h-[2px] w-[3px]" viewBox="0 0 3 2"><path d="M0 0h3L1.500 2z" fill="currentColor" /></svg>
  </div>
);

function ViewTools() {
  return (
    <div className="mt-px flex h-[33px] w-[771px] shrink-0 items-center border-b border-[#d6d4d2] pb-[2px]">
      <Sep c="ml-[6px] h-[20px]" />
      <div className="ml-[13px] h-[12px] w-[12px] shrink-0 border border-black bg-[#91ffff]" />
      <svg className="ml-[14px] h-[13px] w-[17px] shrink-0" viewBox="0 0 17 13"><rect x=".5" y="1.500" width="16" height="10.500" rx="1" fill="#b5b5b5" stroke="#777" /><rect x="1" y="2" width="3.500" height="9.500" fill="#555" /><circle cx="10" cy="7" r="4" fill="#e3e3e3" stroke="#666" /><circle cx="10" cy="7" r="2.200" fill="#5f5b93" /></svg>
      <svg className="ml-[4px] h-[4px] w-[7px] shrink-0" viewBox="0 0 7 4"><path d="M.5 0h6l-3 4z" fill="#444" /></svg>
      <Sep c="ml-[11px] h-[20px]" />
      <Btn on c="ml-[6px] h-[26px] w-[26px]"><BigT /></Btn>
      <Sep c="ml-[7px] h-[20px]" />
      <Btn on c="ml-[6px] h-[26px] w-[26px]"><svg className="h-[16px] w-[16px]" viewBox="0 0 16 16"><path d="M2 2l12 12" stroke="#9aa8c9" strokeWidth="1.200" /><circle cx="2" cy="2" r="1.500" fill="#aac7f0" stroke="#789" strokeWidth=".5" /><circle cx="14" cy="14" r="1.500" fill="#aac7f0" stroke="#789" strokeWidth=".5" /></svg></Btn>
      <Btn on c="ml-[2px] h-[26px] w-[26px]"><svg className="h-[18px] w-[18px]" viewBox="0 0 18 18" fill="none"><path d="M6 17Q6 5 14 3" stroke="#ef8f8f" strokeWidth="2" /><path d="M8 17Q8 8 15 5.500" stroke="#efd98e" strokeWidth="2" /><path d="M10 17Q10 10 16 8" stroke="#a5dcb8" strokeWidth="2" /><path d="M2 2l13 14" stroke="#5f86b9" /><circle cx="2" cy="2" r="1.300" fill="#aac7f0" /><circle cx="15" cy="16" r="1.300" fill="#ef8833" /></svg></Btn>
      <div className="w-[7px] shrink-0" /><BigT light />
      <Slider c="ml-[14px] w-[88px]" thumb="ml-[9px]" />
      <Sep c="ml-[11px] h-[20px]" />
      <LetterMenu c="ml-[13px] w-[14px] text-[#222]" />
      <LetterMenu c="ml-[13px] w-[15px] text-[#3b5fc9]" />
      <T w={103} c="ml-[12px]">Dialog.bold, 32</T>
      <Slider c="ml-[12px] w-[87px]" thumb="ml-[28px]" />
      <div className="ml-[6px] h-[16px] w-[16px] shrink-0 bg-black" />
      <svg className="ml-[6px] h-[16px] w-[16px] shrink-0" viewBox="0 0 16 16"><rect x="1" y="2" width="12" height="13" rx="1" fill="#f4f4f4" stroke="#666" /><rect x="4" y=".5" width="6" height="3" rx="1" fill="#e7c874" stroke="#886a1c" /><path d="M3 6h6M3 8h4M3 11h3" stroke="#777" /><path d="M12 5v4l2 1 1.500 5h-6L7 12l3-1V7z" fill="#fff" stroke="#444" strokeWidth=".9" /></svg>
    </div>
  );
}

function LabelSettings() {
  const tab = "flex items-center justify-center rounded-t-[4px] border border-b-0 pt-[5px] ";
  const group = "flex shrink-0 flex-col ";
  return (
    <>
      <div className="mt-[3px] h-[2px] shrink-0 border-t border-b border-b-white border-t-[#d0cecc]" />
      <div className="relative z-10 mt-[8px] flex h-[31px] shrink-0 items-end pl-[2px]">
        <div className={tab + "h-[29px] w-[54px] border-[#c3c1be] bg-linear-to-b from-[#efeeed] to-[#dbdad8] text-[#666]"}><T w={45}>Global</T></div>
        <div className={tab + "h-[29px] w-[52px] border-[#c3c1be] bg-linear-to-b from-[#efeeed] to-[#dbdad8] text-[#666]"}><T w={44}>Edges</T></div>
        <div className={tab + "-mb-px h-[32px] w-[57px] border-[#aaa8a5] bg-[#f8f8f7]"}><T w={46}>Labels</T></div>
      </div>
      <div className="mb-[3px] ml-[2px] flex min-h-0 flex-1 overflow-hidden rounded-bl-[4px] border border-r-0 border-[#aeaca9]">
        <div className={group + "w-[318px] pl-[13px]"}>
          <div className="mt-[14px] flex h-[19px] items-center"><T w={38}>Node</T><Checked c="ml-[7px]" /></div>
          <div className="flex h-[28px] items-center pl-[15px]">
            <T w={29}>Fo...</T>
            <Btn c="ml-[16px] h-[27px] w-[121px]"><T w={112} c="font-bold italic">Dialog.bold, 32</T></Btn>
            <T w={41} c="ml-[24px]">Color:</T>
            <Btn c="ml-[13px] h-[28px] w-[25px]"><div className="h-[12px] w-[12px] bg-black" /></Btn>
          </div>
          <div className="mt-[14px] flex h-[20px] items-center pl-[15px]"><T w={31}>Size:</T><Slider c="ml-[25px] w-[208px]" thumb="ml-[89px]" /></div>
        </div>
        <Sep c="my-[3px]" />
        <div className={group + "w-[319px] pl-[20px] text-[#aaa8a6]"}>
          <div className="mt-[14px] flex h-[19px] items-center text-[#4c4c4c]"><T w={37}>Edge</T><div className="ml-[7px] h-[14px] w-[14px] rounded-[3px] border border-[#969492] bg-white" /></div>
          <div className="mt-[7px] flex h-[28px] items-center pl-[18px]">
            <T w={29}>Fo...</T>
            <Btn off c="ml-[16px] h-[27px] w-[112px]"><T w={103}>Dialog.bold, 32</T></Btn>
            <T w={41} c="ml-[24px]">Color:</T>
            <Btn off c="ml-[14px] h-[28px] w-[24px]"><div className="h-[12px] w-[12px] border border-[#c9c9c9] bg-[#dcdcdc]" /></Btn>
          </div>
          <div className="mt-[14px] flex h-[20px] items-center pl-[18px]"><T w={31}>Size:</T><Slider off c="ml-[25px] w-[199px]" thumb="ml-[84px]" /></div>
        </div>
        <Sep c="my-[3px]" />
        <div className="flex shrink-0 flex-col items-start pl-[21px] pt-[13px]">
          <div className="flex h-[27px] items-center"><T w={31}>Size:</T><Combo c="ml-[22px] h-[26px] w-[92px]" arrow="w-[28px]" w={47}>Scaled</Combo></div>
          <div className="mt-[6px] flex h-[27px] items-center"><T w={41}>Color:</T><Combo c="ml-[12px] h-[26px] w-[92px]" arrow="w-[28px]" w={32}>Text</Combo></div>
          <T w={130} c="mt-[13px]">Hide non-selected</T>
        </div>
      </div>
    </>
  );
}

function Center() {
  return (
    <div className="ml-[4px] flex h-[632px] w-[798px] shrink-0 flex-col">
      <div className="relative z-10 flex h-[27px] shrink-0 items-end justify-between">
        <div className="-mb-px flex h-[29px] w-[75px] items-center rounded-t-[4px] border border-b-0 border-[#b5b3b0] bg-white pb-[2px] pl-[8px]"><T w={42}>Graph</T><Close c="ml-[10px]" /></div>
        <NavButtons c="mb-[5px] mr-[4px]" />
      </div>
      <div className="flex min-h-0 flex-1 flex-col overflow-hidden border border-[#aeaca9]">
        <div className="flex h-[28px] shrink-0 items-center">
          <div className="h-[28px] w-[27px] shrink-0 bg-white"><Monogram c="h-full w-full" ink="#111111" /></div>
          <T w={96} c="ml-[4px] mb-px font-['DejaVu_Sans',sans-serif] text-[9px] font-normal leading-[14px]">Rectangle selection</T>
          <Sep c="ml-[79px] h-[18px]" />
        </div>
        <div className="flex h-[371px] shrink-0"><SideTools /><Graph /></div>
        <div className="flex shrink-0">
          <ViewTools />
          <svg className="ml-[8px] mt-[12px] h-[10px] w-[9px]" viewBox="0 0 9 10"><path d="M.5.500h8v4l-4 5-4-5z" fill="#555" /><path d="M1.500 2.500h6M2 5h5" stroke="#eee" /></svg>
        </div>
        <LabelSettings />
      </div>
    </div>
  );
}

const Folder = ({ c }: { c: string }) => (
  <svg className={"shrink-0 " + c} viewBox="0 0 17 14" preserveAspectRatio="none"><path d="M2 2q0-1.500 1.500-1.500H13Q15 .500 15 2v4H2z" fill="#f3e7c8" stroke="#bd984b" strokeWidth=".8" /><path d="M11 1.500h3" stroke="#38a9e5" strokeWidth="1.500" /><path d="M.6 3h5l1.500 1.500h9.300V13H.6z" fill="#efcf82" stroke="#bf9645" strokeWidth=".8" /></svg>
);

function Context() {
  return (
    <div className={frame + "h-[67px]"}>
      <PanelHead title="Context" w={56} tab="w-[85px]" />
      <div className="flex min-h-0 flex-1 flex-col items-start overflow-hidden pl-[7px]">
        <div className="-mt-[8px] flex h-[20px] shrink-0 items-center"><T w={50} c="font-bold">Nodes:</T><T w={17} c="ml-[9px]">30</T></div>
        <div className="flex h-[20px] shrink-0 items-center"><T w={49} c="font-bold">Edges:</T><T w={24} c="ml-[10px]">137</T></div>
        <T w={101} c="mt-[3px]">Directed Graph</T>
      </div>
    </div>
  );
}

function Filters() {
  const rows: [string, number][] = [["Attributes", 70], ["Dynamic", 59], ["Edges", 43], ["Operator", 65], ["Topology", 65], ["Saved queries", 96]];
  return (
    <div className={frame + "mt-[6px] h-[559px]"}>
      <PanelHead title="Filters" w={43} tab="w-[70px]" extra={<div className="flex w-[91px] shrink-0 items-center border-r border-[#bbb9b6] pb-[2px] pl-[7px]"><T w={62}>Statistics</T></div>} />
      <div className="flex h-[30px] shrink-0 items-center border-b border-[#d6d4d2] pl-[7px]">
        <T w={39}>Reset</T><Sep c="ml-[11px] h-[18px]" />
        <svg className="ml-[12px] h-[15px] w-[16px]" viewBox="0 0 16 15"><rect width="13" height="14" fill="#8f8f8f" /><path d="M2 3h9M2 6h9M2 9h9M5 1v12" stroke="#a8a8a8" /><path d="M9 7h4V5l3 4-3 4v-2H9z" fill="#999" /></svg>
        <svg className="ml-[12px] h-[13px] w-[16px]" viewBox="0 0 16 13"><rect width="13" height="12" fill="#929292" /><path d="M9 6h4V4l3 4-3 4v-2H9z" fill="#999" /></svg>
        <span className="ml-[14px] w-[7px] font-['Liberation_Serif',serif] text-[11px] font-bold text-[#909090]">A</span>
        <svg className="h-[8px] w-[8px]" viewBox="0 0 8 8"><path d="M0 3h4V0l4 4-4 4V5H0z" fill="#999" /></svg>
      </div>
      <div className="flex h-[260px] shrink-0 flex-col bg-white text-[#3c3c3c]">
        <div className="flex h-[19px] shrink-0 items-center pl-[5px]"><Folder c="h-[14px] w-[17px]" /><T w={48} c="ml-[7px]">Library</T></div>
        {rows.map(([t, w], i) => (
          <div key={t} className="flex h-[19px] shrink-0 items-center pl-[3px]">
            <svg className="mb-[2px] h-[8px] w-[7px] shrink-0" viewBox="0 0 7 8">{i < 5 && <path d="M.8.800L6 4 .8 7.200z" fill="#777" stroke="#333" />}</svg>
            <Folder c="ml-[12px] mb-px h-[9px] w-[10px]" /><T w={w} c="ml-[11px]">{t}</T>
          </div>
        ))}
      </div>
      <div className="flex h-[4px] shrink-0 items-center justify-center"><div className="h-px w-[8px] border-t border-dotted border-[#999]" /></div>
      <div className="flex h-[193px] shrink-0 flex-col bg-white text-[#3c3c3c]">
        <div className="flex h-[18px] shrink-0 items-center pl-[6px]">
          <svg className="h-[14px] w-[14px]" viewBox="0 0 14 14"><path d="M.5.800h13L9 6.500V13l-3-1.500v-5z" fill="#999" stroke="#777" strokeWidth=".7" /><path d="M2 2h10" stroke="#ddd" /></svg>
          <T w={55} c="ml-[9px]">Queries</T>
        </div>
        <div className="flex h-[19px] shrink-0 items-center pl-[20px]">
          <svg className="h-[15px] w-[15px]" viewBox="0 0 15 15"><circle cx="7" cy="7" r="6.500" fill="#e14d55" /><circle cx="7" cy="7" r="4.800" fill="#fff" /><circle cx="7" cy="7" r="3.300" fill="#d93c45" /><path d="M7 7l6 2-2 1 2 3-1.500 1-2-3L8 12.500z" fill="#fff" stroke="#555" strokeWidth=".6" /></svg>
          <T w={103} c="ml-[9px] font-normal italic">Drag filter here</T>
        </div>
      </div>
      <div className="flex flex-1 items-start justify-end pr-[5px] pt-[11px] text-[#a9a7a5]">
        <Btn off c="h-[31px] w-[87px] gap-[7px] pr-[2px]"><Play off /><T w={37}>Filter</T></Btn>
      </div>
    </div>
  );
}

export default function App() {
  return (
    <div className="flex h-[768px] w-[1366px] flex-col overflow-hidden bg-[#f2f1f0]">
      <TopBar />
      <div className="flex min-h-0 flex-1">
        <Launcher />
        <div className="flex min-w-0 flex-1 flex-col">
          <Menu />
          <Modes />
          <DocTabs />
          <div className={"flex min-h-0 flex-1 pl-[4px] pt-[7px] text-[#4c4c4c] " + ui}>
            <div className="flex w-[259px] shrink-0 flex-col"><Appearance /><LayoutPanel /></div>
            <Center />
            <div className="ml-[4px] flex w-[228px] shrink-0 flex-col"><Context /><Filters /></div>
          </div>
        </div>
      </div>
    </div>
  );
}
